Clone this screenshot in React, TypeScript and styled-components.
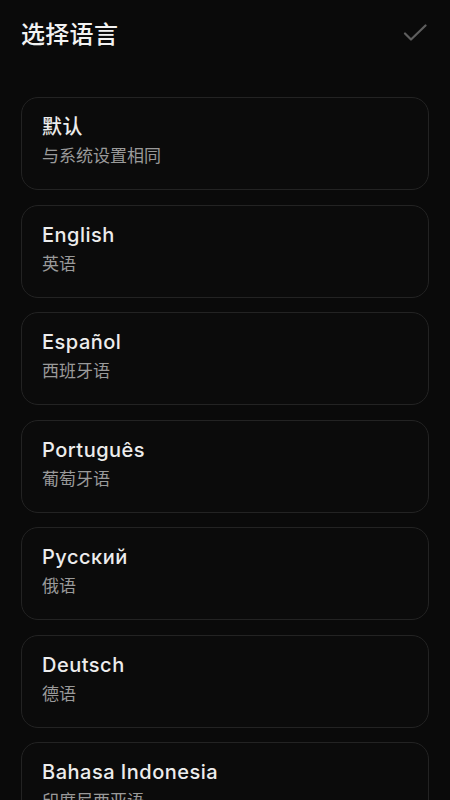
import React from "react";
import styled, { createGlobalStyle } from "styled-components";

const Global = createGlobalStyle`
  html, body { margin: 0; padding: 0; background: #0a0a0a; }
  body { font-family: Inter, "Noto Sans", "Noto Sans CJK SC", sans-serif; overflow: hidden; }
`;

const Page = styled.div`
  width: 450px;
  height: 800px;
  background: #0a0a0a;
  overflow: hidden;
  box-sizing: border-box;
`;

const Header = styled.div`
  height: 66px;
  display: flex;
  align-items: center;
  justify-content: space-between;
  padding: 0 22px 0 21px;
`;

const Title = styled.h1`
  margin: 0;
  font-family: "Noto Sans CJK SC", sans-serif;
  font-size: 24px;
  line-height: 32px;
  font-weight: 500;
  color: #f2f2f2;
  letter-spacing: 0.3px;
`;

const CheckButton = styled.button`
  background: none;
  border: 0;
  padding: 0;
  width: 26px;
  height: 26px;
  display: flex;
  align-items: center;
  justify-content: center;
`;

const List = styled.div`
  display: flex;
  flex-direction: column;
  gap: 14.5px;
  padding: 31px 21px 0 21px;
`;

const Card = styled.div`
  height: 93px;
  flex-shrink: 0;
  box-sizing: border-box;
  border: 1.5px solid #232323;
  border-radius: 17px;
  background: #0b0b0b;
  padding: 16px 20px 0;
  display: flex;
  flex-direction: column;
  gap: 3px;
`;

const Name = styled.div`
  font-family: Inter, "Noto Sans CJK SC", sans-serif;
  font-size: 20px;
  letter-spacing: 0.5px;
  font-weight: 500;
  color: #ededed;
  line-height: 26px;
`;

const Sub = styled.div`
  font-family: "Noto Sans CJK SC", sans-serif;
  font-size: 17px;
  color: #9a9a9a;
  line-height: 24px;
`;

const langs = [
  ["默认", "与系统设置相同"],
  ["English", "英语"],
  ["Español", "西班牙语"],
  ["Português", "葡萄牙语"],
  ["Русский", "俄语"],
  ["Deutsch", "德语"],
  ["Bahasa Indonesia", "印度尼西亚语"],
];

export default function App() {
  return (
    <Page>
      <Global />
      <Header>
        <Title>选择语言</Title>
        <CheckButton aria-label="确定">
          <svg width="24" height="18" viewBox="0 0 24 18" fill="none">
            <path d="M2 9.5 L8 15.5 L22.5 1.5" stroke="#5e5e5e" strokeWidth="2.2" strokeLinecap="round" strokeLinejoin="round" />
          </svg>
        </CheckButton>
      </Header>
      <List>
        {langs.map(([n, s]) => (
          <Card key={n}>
            <Name>{n}</Name>
            <Sub>{s}</Sub>
          </Card>
        ))}
      </List>
    </Page>
  );
}
